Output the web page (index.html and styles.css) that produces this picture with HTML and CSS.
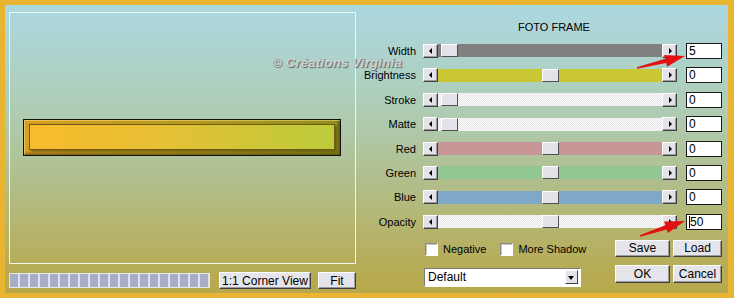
FILE: index.html
```html
<!DOCTYPE html>
<html lang="en">
<head>
    <meta charset="UTF-8">
    <title>Foto Frame</title>
    <link rel="stylesheet" href="styles.css">
</head>
<body>

<div class="dialog">

    <!-- preview side -->
    <div class="preview-col">
        <div class="preview">
            <div class="frame"><div class="frame-inner"></div></div>
        </div>
        <div class="preview-bar">
            <div class="progress"></div>
            <div class="btn corner">1:1 Corner View</div>
            <div class="btn fit">Fit</div>
        </div>
    </div>

    <!-- settings side -->
    <div class="controls">
        <div class="title">FOTO FRAME</div>

        <div class="row">
            <span class="label">Width</span>
            <span class="arrow-btn left"></span>
            <span class="track gray"><span class="thumb start"></span></span>
            <span class="arrow-btn right"></span>
            <span class="value">5</span>
        </div>
        <div class="row">
            <span class="label">Brightness</span>
            <span class="arrow-btn left"></span>
            <span class="track yellow"><span class="thumb mid"></span></span>
            <span class="arrow-btn right"></span>
            <span class="value">0</span>
        </div>
        <div class="row">
            <span class="label">Stroke</span>
            <span class="arrow-btn left"></span>
            <span class="track dither"><span class="thumb start"></span></span>
            <span class="arrow-btn right"></span>
            <span class="value">0</span>
        </div>
        <div class="row">
            <span class="label">Matte</span>
            <span class="arrow-btn left"></span>
            <span class="track dither"><span class="thumb start"></span></span>
            <span class="arrow-btn right"></span>
            <span class="value">0</span>
        </div>
        <div class="row">
            <span class="label">Red</span>
            <span class="arrow-btn left"></span>
            <span class="track red"><span class="thumb mid"></span></span>
            <span class="arrow-btn right"></span>
            <span class="value">0</span>
        </div>
        <div class="row">
            <span class="label">Green</span>
            <span class="arrow-btn left"></span>
            <span class="track green"><span class="thumb mid"></span></span>
            <span class="arrow-btn right"></span>
            <span class="value">0</span>
        </div>
        <div class="row">
            <span class="label">Blue</span>
            <span class="arrow-btn left"></span>
            <span class="track blue"><span class="thumb mid"></span></span>
            <span class="arrow-btn right"></span>
            <span class="value">0</span>
        </div>
        <div class="row">
            <span class="label">Opacity</span>
            <span class="arrow-btn left"></span>
            <span class="track dither"><span class="thumb mid"></span></span>
            <span class="arrow-btn right"></span>
            <span class="value"><span class="caret"></span>50</span>
        </div>

        <div class="bottom">
            <div class="options">
                <div class="checks">
                    <label class="check"><span class="box"></span>Negative</label>
                    <label class="check shadow"><span class="box"></span>More Shadow</label>
                </div>
                <div class="select">
                    <span>Default</span>
                    <span class="drop"></span>
                </div>
            </div>
            <div class="actions">
                <div class="btn">Save</div>
                <div class="btn">Load</div>
                <div class="btn">OK</div>
                <div class="btn">Cancel</div>
            </div>
        </div>
    </div>

    <div class="watermark">© Créations Virginia</div>
</div>

<!-- red arrows on top -->
<svg class="arrows" width="734" height="298" viewBox="0 0 734 298">
    <polygon points="637.2,68.8 666.1,63 667.1,66.7 685,56 664.1,55.1 665.1,58.8 636.8,67.2" fill="#e21212"/>
    <polygon points="640.3,236.8 666.7,229.4 667.9,233 685,221 664.1,221.6 665.3,225.2 639.7,235.2" fill="#e21212"/>
</svg>

</body>
</html>
```

FILE: styles.css
```css
/* general */
body {
    margin: 0;
    background: #e8b432;
    font-family: "Liberation Sans", Arial, sans-serif;
    font-size: 11px;
    color: #000;
}

.dialog {
    position: relative;
    display: flex;
    height: 288px;
    margin: 5px 6px 5px 5px;
    background: linear-gradient(180deg, #acd8e2 0%, #aecdb6 35%, #b1bf8e 60%, #b6ae5c 88%, #b8a84a 100%);
}

/* preview */
.preview-col {
    width: 351px;
    padding: 7px 0 0 4px;
    box-sizing: border-box;
}

.preview {
    height: 252px;
    border: 1px solid #f2f4f2;
    padding: 106px 14px 0 13px;
    box-sizing: border-box;
}

.frame {
    border: 1px solid #111;
    padding: 4px 5px 5px 5px;
    background: linear-gradient(90deg, #d89f24, #b79a20 50%, #8e8e1c);
    box-shadow: inset 1px 1px 0 rgba(255, 230, 140, 0.5), inset -2px -2px 2px rgba(60, 50, 0, 0.5);
}

.frame-inner {
    height: 26px;
    box-sizing: border-box;
    border: 1px solid #6e5a12;
    background: linear-gradient(90deg, #f8bb2d, #e8bf34 40%, #bccc3b);
    box-shadow: 2px 2px 2px rgba(60, 50, 0, 0.5);
}

.preview-bar {
    display: flex;
    align-items: center;
    height: 17px;
    margin-top: 8px;
}

.progress {
    width: 201px;
    height: 15px;
    margin-right: 9px;
    box-sizing: border-box;
    border: 1px solid #e6e6ee;
    background: repeating-linear-gradient(90deg, #a8adc8 0 8px, #e2e2ea 8px 10px);
}

.corner {
    width: 92px;
    margin-right: 7px;
}

.fit {
    width: 38px;
}

/* buttons */
.btn {
    height: 100%;
    box-sizing: border-box;
    display: flex;
    align-items: center;
    justify-content: center;
    background: #e4e4ea;
    border: 1px solid;
    border-color: #fff #404040 #404040 #fff;
    box-shadow: inset -1px -1px 0 #9a9aa0;
    font-size: 12px;
    white-space: nowrap;
}

/* settings */
.controls {
    flex: 1;
    padding: 15px 6px 0 4px;
}

.title {
    height: 14px;
    line-height: 14px;
    padding-left: 26px;
    margin-bottom: 4.8px;
    text-align: center;
}

.row {
    display: flex;
    align-items: center;
    height: 24.4px;
}

.label {
    width: 56px;
    margin-right: 7px;
    text-align: right;
}

.arrow-btn {
    position: relative;
    width: 15px;
    height: 14px;
    box-sizing: border-box;
    background: #e2e2e8;
    border: 1px solid;
    border-color: #fff #404040 #404040 #fff;
    box-shadow: inset -1px -1px 0 #9a9aa0;
}

.arrow-btn::after {
    content: '';
    position: absolute;
    top: 3px;
    left: 5px;
    border-top: 3px solid transparent;
    border-bottom: 3px solid transparent;
}

.arrow-btn.left::after {
    border-right: 3px solid #000;
}

.arrow-btn.right::after {
    left: 6px;
    border-left: 3px solid #000;
}

.track {
    flex: 1;
    height: 13px;
    display: flex;
}

.track.gray { background: #808080; }
.track.yellow { background: #c9c832; }
.track.red { background: #c99697; }
.track.green { background: #92c794; }
.track.blue { background: #7fa8c8; }
.track.dither {
    background: repeating-conic-gradient(#ffffff 0 25%, #e2e2e2 0 50%) 0 0 / 2px 2px;
}

.thumb {
    width: 17px;
    height: 13px;
    box-sizing: border-box;
    background: #e2e2e8;
    border: 1px solid;
    border-color: #fff #505050 #505050 #fff;
}

.thumb.start {
    margin-left: 3px;
}

.thumb.mid {
    margin: 0 auto;
}

.value {
    display: flex;
    align-items: center;
    width: 36px;
    height: 16px;
    margin-left: 9px;
    padding-left: 2px;
    box-sizing: border-box;
    background: #fff;
    border: 1px solid #1a1a1a;
    font-size: 12px;
}

.caret {
    width: 1px;
    height: 12px;
    background: #000;
}

/* bottom part */
.bottom {
    display: flex;
}

.options {
    width: 157px;
    margin-left: 64px;
}

.checks {
    display: flex;
    align-items: center;
    height: 17px;
    margin-top: 7px;
    white-space: nowrap;
}

.check {
    display: flex;
    flex-shrink: 0;
    align-items: center;
    gap: 5px;
    margin-left: 1px;
    font-size: 11px;
}

.check.shadow {
    margin-left: 14px;
}

.box {
    width: 13px;
    height: 13px;
    box-sizing: border-box;
    background: #fff;
    border: 1px solid;
    border-color: #8a8a8a #fff #fff #8a8a8a;
    box-shadow: inset 1px 1px 0 #c8c8c8;
}

.select {
    display: flex;
    align-items: center;
    justify-content: space-between;
    height: 19px;
    margin-top: 10px;
    padding: 0 2px 0 3px;
    box-sizing: border-box;
    background: #fff;
    border: 1px solid;
    border-color: #7a7a7a #fff #fff #7a7a7a;
    font-size: 12px;
}

.drop {
    position: relative;
    width: 13px;
    height: 14px;
    box-sizing: border-box;
    background: #e2e2e8;
    border: 1px solid;
    border-color: #fff #404040 #404040 #fff;
}

.drop::after {
    content: '';
    position: absolute;
    top: 5px;
    left: 2px;
    border-left: 3.5px solid transparent;
    border-right: 3.5px solid transparent;
    border-top: 4px solid #000;
}

.actions {
    display: grid;
    grid-template-columns: 55px 49px;
    grid-template-rows: 17px 18px;
    column-gap: 3px;
    row-gap: 8px;
    margin: 5.8px 0 0 auto;
}

/* overlays */
.watermark {
    position: absolute;
    left: 267px;
    top: 51px;
    font-size: 13px;
    line-height: 13px;
    font-weight: bold;
    font-style: italic;
    letter-spacing: 0.3px;
    color: #cfd2d4;
    text-shadow: 1px 1px 1px #5c625e;
}

.arrows {
    position: absolute;
    top: 0;
    left: 0;
    pointer-events: none;
}
```
